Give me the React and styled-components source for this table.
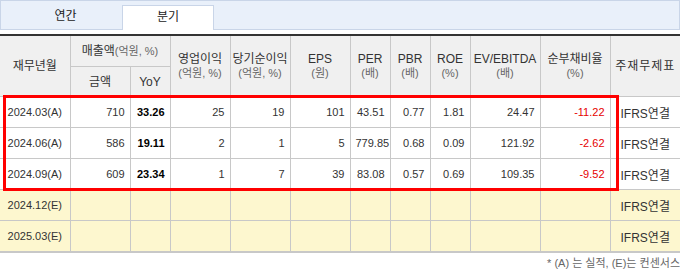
import React from "react";
import styled, { createGlobalStyle } from "styled-components";

const GlobalStyle = createGlobalStyle`
  html, body { margin: 0; padding: 0; background: #fff; }
  body {
    font-family: "Liberation Sans", "Noto Sans CJK KR", sans-serif;
    color: #333;
  }
`;

const Page = styled.div`
  width: 680px;
  overflow: hidden;
`;

const TabBar = styled.div`
  display: flex;
  align-items: flex-end;
  height: 30px;
  box-sizing: border-box;
  background: #e9f0fa;
  border: 1px solid #c9d5e8;
`;

const Tab = styled.div`
  width: ${(p) => p.$w}px;
  box-sizing: border-box;
  text-align: center;
  font-size: 12px;
  color: #222;
  padding-left: ${(p) => p.$pl || 0}px;
  height: ${(p) => (p.$active ? 25 : 28)}px;
  line-height: ${(p) => (p.$active ? 23 : 30)}px;
  margin-bottom: ${(p) => (p.$active ? -1 : 0)}px;
  background: ${(p) => (p.$active ? "#fff" : "transparent")};
  border: ${(p) => (p.$active ? "1px solid #c9d5e8" : "none")};
  border-bottom: none;
`;

const TableArea = styled.div`
  position: relative;
  margin-top: 4px;
`;

const Table = styled.table`
  width: 680px;
  table-layout: fixed;
  border-collapse: collapse;
  border-top: 2px solid #333;
  border-bottom: 2px solid #c8c8c8;
`;

const Th = styled.th`
  background: #f0f0f0;
  font-weight: normal;
  font-size: 12px;
  line-height: 14px;
  color: #333;
  padding: 0;
  text-align: center;
  letter-spacing: ${(p) => p.$ls || 0}px;
  height: ${(p) => p.$h || 30}px;
  border: 1px solid #c8c8c8;
  border-top: none;
  &:first-child { border-left: none; }
  &:last-child { border-right: none; }
  white-space: nowrap;
`;

const SubTh = styled(Th)`
  &:first-child { border-left: 1px solid #c8c8c8; }
`;

const Unit = styled.span`
  display: ${(p) => (p.$inline ? "inline" : "block")};
  font-size: 11px;
  color: #666;
  letter-spacing: 0;
`;

const Td = styled.td`
  height: 30px;
  padding: 0 5px;
  font-size: 11px;
  color: ${(p) => (p.$neg ? "#e60000" : p.$strong ? "#000" : "#333")};
  font-weight: ${(p) => (p.$strong ? "bold" : "normal")};
  text-align: ${(p) => p.$align || "right"};
  background: ${(p) => (p.$est ? "#fdf7cf" : "#fff")};
  border: 1px solid #c8c8c8;
  white-space: nowrap;
  overflow: hidden;
  &:first-child { border-left: none; }
  &:last-child { border-right: none; }
`;

const LabelTd = styled(Td)`
  font-size: ${(p) => (p.$kr ? 12 : 11)}px;
  text-align: center;
  padding: 0;
`;

const Highlight = styled.div`
  position: absolute;
  left: 3px;
  top: 61px;
  width: 616px;
  height: 96px;
  box-sizing: border-box;
  border: 3px solid #ff0000;
  pointer-events: none;
`;

const Footer = styled.div`
  text-align: right;
  white-space: nowrap;
  font-size: 11px;
  color: #666;
  margin-top: 3px;
  line-height: 14px;
`;

const widths = [70, 60, 40, 60, 60, 60, 40, 40, 40, 70, 70, 70];

const rows = [
  { d: "2024.03(A)", v: ["710", "33.26", "25", "19", "101", "43.51", "0.77", "1.81", "24.47", "-11.22"] },
  { d: "2024.06(A)", v: ["586", "19.11", "2", "1", "5", "779.85", "0.68", "0.09", "121.92", "-2.62"] },
  { d: "2024.09(A)", v: ["609", "23.34", "1", "7", "39", "83.08", "0.57", "0.69", "109.35", "-9.52"] },
  { d: "2024.12(E)", est: true, v: Array(10).fill("") },
  { d: "2025.03(E)", est: true, v: Array(10).fill("") },
];

const heads = [
  ["영업이익", "(억원, %)"],
  ["당기순이익", "(억원, %)"],
  ["EPS", "(원)"],
  ["PER", "(배)"],
  ["PBR", "(배)"],
  ["ROE", "(%)"],
  ["EV/EBITDA", "(배)"],
  ["순부채비율", "(%)"],
];

export default function App() {
  return (
    <Page>
      <GlobalStyle />
      <TabBar>
        <Tab $w={121} $pl={8}>연간</Tab>
        <Tab $w={92} $active>분기</Tab>
      </TabBar>
      <TableArea>
        <Table>
          <colgroup>
            {widths.map((w, i) => (
              <col key={i} style={{ width: w }} />
            ))}
          </colgroup>
          <thead>
            <tr>
              <Th rowSpan={2}>재무년월</Th>
              <Th colSpan={2} $h={30}>
                매출액<Unit $inline>(억원, %)</Unit>
              </Th>
              {heads.map(([t, u]) => (
                <Th key={t} rowSpan={2}>
                  {t}
                  <Unit>{u}</Unit>
                </Th>
              ))}
              <Th rowSpan={2} $ls={1}>주재무제표</Th>
            </tr>
            <tr>
              <SubTh $h={29}>금액</SubTh>
              <SubTh $h={29}>YoY</SubTh>
            </tr>
          </thead>
          <tbody>
            {rows.map((r) => (
              <tr key={r.d}>
                <LabelTd $est={r.est}>{r.d}</LabelTd>
                {r.v.map((x, i) => (
                  <Td
                    key={i}
                    $est={r.est}
                    $strong={i === 1}
                    $neg={x.startsWith("-")}
                  >
                    {x}
                  </Td>
                ))}
                <LabelTd $est={r.est} $kr>
                  IFRS연결
                </LabelTd>
              </tr>
            ))}
          </tbody>
        </Table>
        <Highlight />
      </TableArea>
      <Footer>* (A) 는 실적, (E)는 컨센서스</Footer>
    </Page>
  );
}
